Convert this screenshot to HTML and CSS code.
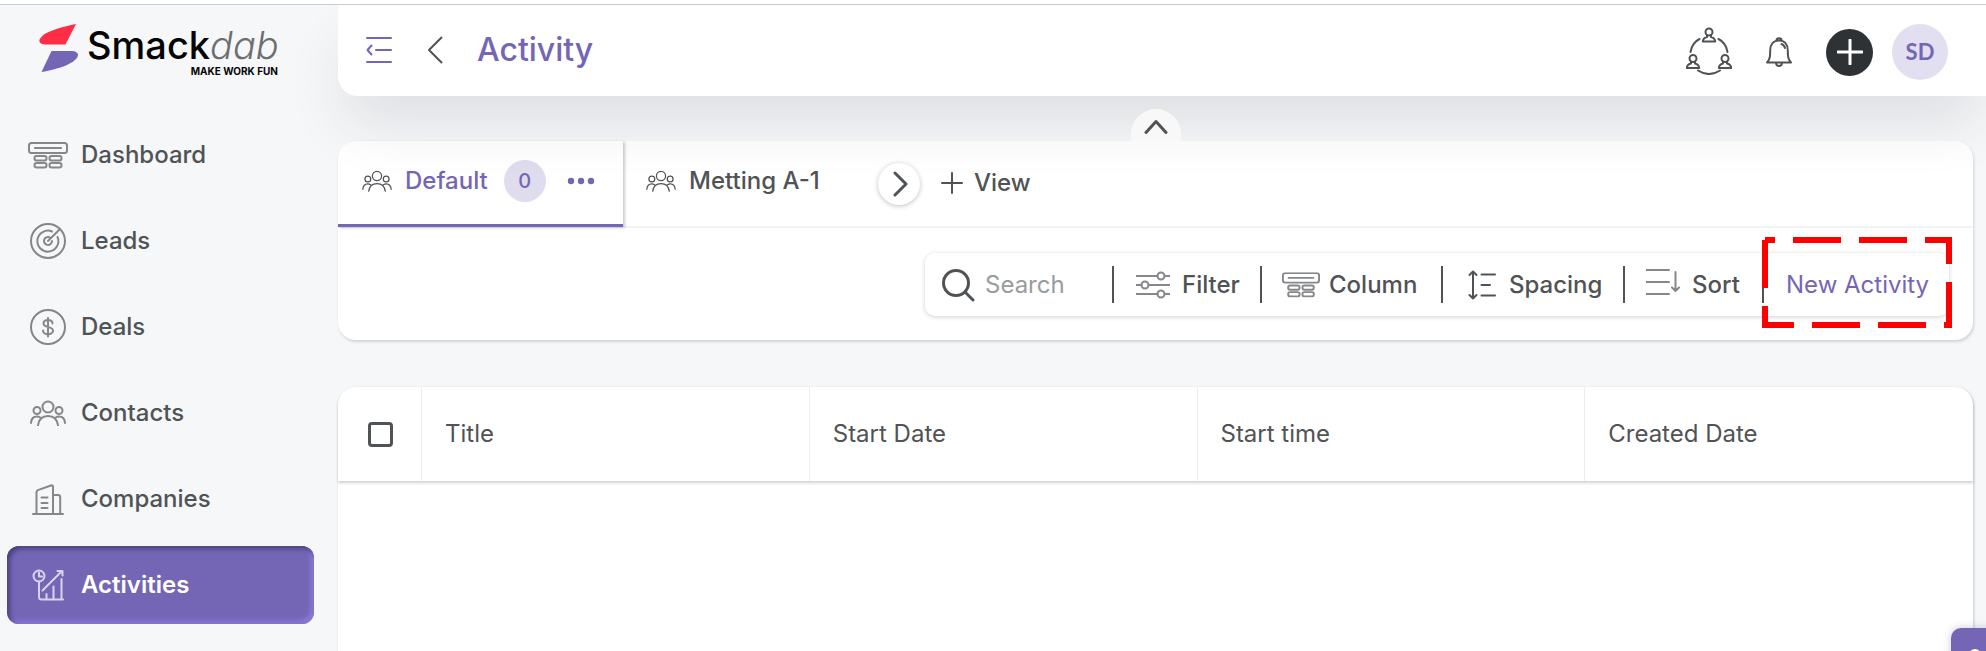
FILE: index.html
```html
<!DOCTYPE html>
<html lang="en">
<head>
<meta charset="utf-8">
<meta name="viewport" content="width=device-width, initial-scale=1">
<title>Smackdab - Activity</title>
<link rel="stylesheet" href="styles.css">
</head>
<body>
<svg class="defs" aria-hidden="true">
  <symbol id="people" viewBox="0 0 36 26">
    <circle cx="18" cy="7" r="5.500"/><circle cx="7" cy="10.500" r="3.500"/><circle cx="29" cy="10.500" r="3.500"/>
    <path d="M8 25.500c.8-6.500 4.500-9.500 10-9.500s9.200 3 10 9.500M1 23c.3-4.500 2.500-6.500 6-6.500 1.300 0 2.300.3 3.300 1M35 23c-.3-4.500-2.500-6.500-6-6.500-1.300 0-2.300.3-3.300 1"/>
  </symbol>
  <symbol id="board" viewBox="0 0 40 27">
    <rect x="1" y="1" width="38" height="10" rx="2.500"/><path d="M7 6h26"/>
    <rect x="6.500" y="14" width="12" height="4.500" rx="2"/><rect x="21.500" y="14" width="12" height="4.500" rx="2"/>
    <rect x="6.500" y="21" width="12" height="4.500" rx="2"/><rect x="21.500" y="21" width="12" height="4.500" rx="2"/>
  </symbol>
</svg>
<div class="app">
  <aside class="sidebar">
    <a class="logo" href="#">
      <svg class="logo-mark" viewBox="0 0 40 48" aria-hidden="true">
        <path class="mark-red" d="M37 0C22 3 3 8 .5 16 0 19 2 20 6 20.500h20.500z"/>
        <path class="mark-purple" d="M12.500 27H32c4 0 7 1.500 7 4C38 39 20 45 2.500 48z"/>
      </svg>
      <span class="logo-text">
        <span class="wordmark">Smack<i>dab</i></span>
        <span class="tagline">MAKE WORK FUN</span>
      </span>
    </a>
    <nav class="nav">
      <a class="nav-item" href="#"><svg class="nav-icon" viewBox="0 0 40 36"><use href="#board" y="5" width="40" height="27"/></svg>Dashboard</a>
      <a class="nav-item" href="#"><svg class="nav-icon" viewBox="0 0 40 36"><circle cx="20" cy="18" r="17"/><path d="M24 8.500A10.500 10.500 0 1 0 29.500 14M21.500 14.200A4 4 0 1 0 24 18M20 18 31.500 6.500"/></svg>Leads</a>
      <a class="nav-item" href="#"><svg class="nav-icon" viewBox="0 0 40 36"><circle cx="20" cy="18" r="17"/><path d="M24.500 14.500c0-2.300-2-3.500-4.500-3.500s-4.500 1.200-4.500 3.500c0 4.800 9.500 2.500 9.500 7 0 2.300-2.300 3.700-5 3.700s-5-1.400-5-3.700M20 9v18.500"/></svg>Deals</a>
      <a class="nav-item" href="#"><svg class="nav-icon" viewBox="0 0 40 36"><use href="#people" x="2" y="5" width="36" height="26"/></svg>Contacts</a>
      <a class="nav-item" href="#"><svg class="nav-icon" viewBox="0 0 40 36"><path d="M5 33h30M8.500 33V11c0-1 .4-1.500 1.300-1.900L23 4.500c1.300-.4 2 .1 2 1.300V33M25 14h5c1.500 0 2.200.7 2.200 2.200V33M13.500 16.500h6M13.500 22h6M13.500 27h6"/></svg>Companies</a>
      <a class="nav-item active" href="#" aria-current="page"><svg class="nav-icon" viewBox="0 0 40 36"><circle cx="11" cy="9" r="5.500"/><path d="M11 5.500V9.500h3M11 14.500V30c0 1.700 1 2.500 2.500 2.500H35M14.500 23.500 34 4M29.500 4H34.500V8.500M18.500 32v-5M25.500 32V19.500M33.500 32V12"/></svg>Activities</a>
    </nav>
  </aside>
  <div class="main">
    <header class="topbar">
      <button class="icon-btn" aria-label="Collapse menu"><svg class="menu-icon" width="26" height="28" viewBox="0 0 26 28"><path d="M1 2h24M10 14h15M1 26h24M5.500 9.500 1.500 14l4 4.500"/></svg></button>
      <button class="icon-btn back" aria-label="Back"><svg width="16" height="28" viewBox="0 0 16 28"><path d="M14.500 1.500 2 14l12.500 12.500"/></svg></button>
      <h1>Activity</h1>
      <div class="top-actions">
        <button class="icon-btn team" aria-label="Team"><svg width="46" height="48" viewBox="0 0 46 48"><g id="person"><circle cx="23" cy="5" r="3.500"/><path d="M21 8v2c-3 .7-4 2-4.200 4.500h12.400C29 12 28 10.700 25 10V8"/></g><use href="#person" x="-16" y="26.500"/><use href="#person" x="16" y="26.500"/><path d="M4.500 25C5.500 19 8.500 14.500 13.500 12M41.500 25c-1-6-4-10.500-9-13M12 43.500c7 4.500 15 4.500 22 0"/></svg></button>
        <button class="icon-btn bell" aria-label="Notifications"><svg width="26" height="30" viewBox="0 0 26 30"><path d="M1 25.500c3-3.500 3.200-6 3.200-12C4.200 7.500 7.500 3.500 13 3.500s8.800 4 8.800 10c0 6 .2 8.500 3.200 12zM10.500 3.500c0-3 5-3 5 0M10 26c.3 4 5.700 4 6 0M15.500 7c2 .6 3 2 3.500 4"/></svg></button>
        <button class="add" aria-label="Add"><svg width="26" height="26" viewBox="0 0 26 26"><path d="M13 1v24M1 13h24"/></svg></button>
        <button class="avatar">SD</button>
      </div>
    </header>
    <main class="content">
      <section class="panel">
        <button class="collapse" aria-label="Collapse panel"><svg width="24" height="16" viewBox="0 0 24 16"><path d="m2 13.500 10-11 10 11"/></svg></button>
        <div class="tabs">
          <div class="tab selected">
            <svg class="people" viewBox="0 0 36 26"><use href="#people"/></svg>
            <a href="#">Default</a><span class="count">0</span>
            <button class="icon-btn dots" aria-label="View options"><svg width="28" height="8" viewBox="0 0 28 8"><circle cx="4" cy="4" r="3.200"/><circle cx="14" cy="4" r="3.200"/><circle cx="24" cy="4" r="3.200"/></svg></button>
          </div>
          <div class="tab second">
            <svg class="people" viewBox="0 0 36 26"><use href="#people"/></svg>
            <a href="#">Metting A-1</a>
          </div>
          <button class="next" aria-label="Next views"><svg width="16" height="26" viewBox="0 0 16 26"><path d="m2 2 11 11L2 24"/></svg></button>
          <button class="add-view"><svg width="22" height="22" viewBox="0 0 22 22"><path d="M11 1v20M1 11h20"/></svg>View</button>
        </div>
        <div class="tool-row">
          <div class="toolbar">
            <label class="search"><svg width="34" height="34" viewBox="0 0 34 34"><circle cx="15" cy="15" r="12.500"/><path d="m24 24 8 8"/></svg><input type="search" placeholder="Search" aria-label="Search"></label>
            <button class="tool filter"><svg width="34" height="28" viewBox="0 0 34 28"><path d="M0 5h21.500M28.500 5H34M0 14h5.500M12.500 14H34M0 23h21.500M28.500 23H34"/><circle cx="25" cy="5" r="3.500"/><circle cx="9" cy="14" r="3.500"/><circle cx="25" cy="23" r="3.500"/></svg>Filter</button>
            <button class="tool column"><svg width="38" height="28" viewBox="0 0 40 27"><use href="#board"/></svg>Column</button>
            <button class="tool spacing"><svg width="28" height="30" viewBox="0 0 28 30"><path d="M5 1.500v27M1.500 5 5 1.500 8.500 5M1.500 25 5 28.500 8.500 25M13.500 4.500H27M13.500 15H22M13.500 25.500H27"/></svg>Spacing</button>
            <button class="tool sort"><svg width="34" height="36" viewBox="0 0 34 36"><path d="M0 3h23M0 15h23M0 27h23M29.500 5v19M26 20.500l3.500 3.500 3.500-3.500"/></svg>Sort</button>
            <button class="tool new">New Activity
              <svg class="marker" width="190" height="91" viewBox="0 0 190 91" aria-hidden="true"><path d="M3 3v85h184V3H3"/></svg>
            </button>
          </div>
        </div>
      </section>
      <section class="table-card">
        <table>
          <colgroup><col class="check-col"><col><col><col><col></colgroup>
          <thead><tr>
            <th class="check"><input type="checkbox" aria-label="Select all"></th>
            <th>Title</th><th>Start Date</th><th>Start time</th><th>Created Date</th>
          </tr></thead>
        </table>
      </section>
    </main>
  </div>
</div>
<button class="support" aria-label="Support"><svg width="24" height="24" viewBox="0 0 24 24"><circle cx="12" cy="7" r="6"/><path d="M2 24c0-7 4-9 10-9s10 2 10 9z"/></svg></button>
</body>
</html>
```

FILE: styles.css
```css
:root {
  --purple: #7466b5;
  --ink: #505356;
  --page: #f5f7f9;
  --lilac: #e2dff0;
}
* { box-sizing: border-box; }
body {
  margin: 0;
  font: 500 24px/32px Inter, "Liberation Sans", sans-serif;
  color: var(--ink);
  background: var(--page);
}
button { font: inherit; color: inherit; border: 0; padding: 0; background: none; cursor: pointer; }
a { color: inherit; text-decoration: none; }
svg { display: block; flex: none; fill: none; stroke: currentColor; stroke-width: 2; stroke-linecap: round; stroke-linejoin: round; }
.defs { position: absolute; width: 0; height: 0; }
.app { display: flex; min-height: 100vh; border-top: 4px solid #fff; box-shadow: inset 0 1px #ccc; overflow: hidden; padding-top: 1px; }

.sidebar { flex: none; width: 338px; padding: 12px 24px 24px 7px; }
.logo { display: flex; gap: 8px; padding: 7px 0 0 32px; height: 99px; color: #050505; }
.logo-mark { width: 40px; height: 48px; stroke: none; }
.mark-red { fill: #ff2d46; }
.mark-purple { fill: var(--purple); }
.logo-text { display: flex; flex-direction: column; width: 191px; }
.wordmark { font-size: 38px; line-height: 42px; white-space: nowrap; }
.wordmark i { font-weight: 300; color: #6d6e70; }
.tagline { align-self: flex-end; font-size: 10px; line-height: 10px; font-weight: 700; }
.nav { display: flex; flex-direction: column; gap: 8px; }
.nav-item { display: flex; align-items: center; gap: 13px; height: 78px; padding: 0 21px; border-radius: 12px; }
.nav-icon { width: 40px; height: 36px; stroke: #85878a; stroke-width: 2; }
.active {
  color: #fff; font-weight: 600; background: var(--purple);
  box-shadow: inset 3px 3px 5px #4b4180, inset -3px -3px 5px #8d7cdc;
}
.active .nav-icon { stroke: #d8d3ee; }

.main { flex: 1; min-width: 0; display: flex; flex-direction: column; }
.topbar {
  position: relative; z-index: 1; display: flex; align-items: center; height: 91px; padding: 0 38px 0 28px;
  background: #fff; border-radius: 0 0 0 20px; box-shadow: 0 32px 60px -8px rgba(40, 45, 50, .12);
}
.menu-icon { color: var(--purple); }
.icon-btn, h1 { margin-bottom: 2px; }
.back { margin-left: 35px; }
h1 { margin-top: 0; margin-left: 34px; font-size: 32px; line-height: 40px; font-weight: 500; color: var(--purple); }
.top-actions { display: flex; align-items: center; margin-left: auto; padding-top: 3px; }
.bell { margin: 0 34px; }
.add { display: grid; place-items: center; width: 47px; height: 47px; border-radius: 50%; color: #fff; background: #2e3235; }
.add svg { stroke-width: 3; }
.avatar { width: 56px; height: 56px; margin-left: 19px; border-radius: 50%; background: var(--lilac); color: var(--purple); font: 700 22px/32px Lato, sans-serif; }

.content { flex: 1; display: flex; flex-direction: column; gap: 47px; padding: 45px 13px 0 0; }
.panel { position: relative; background: #fff; border-radius: 18px; box-shadow: 1px 2px 3px rgba(0, 0, 0, .15); }
.collapse { position: absolute; z-index: 2; left: 50%; bottom: 100%; display: grid; place-items: center; width: 50px; height: 32px; margin-left: -25px; padding-top: 3px; border-radius: 25px 25px 0 0; background: #f8f8f8; }
.collapse svg { stroke-width: 3; }
.tabs { display: flex; align-items: center; height: 87px; border-bottom: 2px solid #f1f2f3; }
.tab { display: flex; align-items: center; height: 86px; }
.people { width: 30px; height: 22px; stroke-width: 1.500; margin-right: 13px; }
.selected { width: 285px; padding: 0 28px 3px 24px; color: var(--purple); border-bottom: 3px solid var(--purple); border-top-left-radius: 18px; box-shadow: 2px 1px 3px rgba(0, 0, 0, .2); }
.selected .people { color: var(--ink); }
.count { display: grid; place-items: center; width: 42px; height: 42px; margin-left: 16px; border-radius: 50%; background: #dfdcee; font-size: 20px; }
.dots { margin: 0 0 0 auto; }
.dots svg { fill: currentColor; stroke: none; }
.second { padding: 0 0 5px 23px; width: 255px; white-space: nowrap; }
.next { display: grid; place-items: center; width: 42px; height: 42px; padding-left: 3px; border-radius: 50%; background: #fff; box-shadow: 0 1px 5px rgba(0, 0, 0, .25); z-index: 2; }
.next svg { stroke-width: 3; }
.add-view { display: flex; align-items: center; gap: 11px; margin-left: 21px; padding-bottom: 2px; }
.tool-row { display: flex; justify-content: flex-end; padding: 25px 24px 24px; }
.toolbar { display: flex; align-items: center; height: 63px; border-radius: 10px; background: #fff; box-shadow: 0 1px 5px rgba(0, 0, 0, .18); }
.search { display: flex; align-items: center; gap: 10px; width: 187px; padding-left: 16px; }
.search svg { stroke-width: 3; }
.search input { width: 110px; border: 0; padding: 0; outline: 0; font: inherit; font-weight: 400; background: none; }
.search input::placeholder { color: #999c9e; opacity: 1; }
.tool { position: relative; display: flex; align-items: center; height: 37px; border-left: 2px solid #505356; white-space: nowrap; }
.filter { gap: 12px; width: 148px; padding-left: 22px; }
.column { gap: 9px; width: 181px; padding-left: 20px; }
.spacing { gap: 13px; width: 182px; padding-left: 25px; }
.sort { gap: 12px; width: 139px; padding-left: 21px; }
.new { width: 187px; padding-left: 22px; color: var(--purple); font-weight: 400; }
.filter svg, .column svg, .sort svg { stroke-width: 2; color: #85878a; }
.marker { position: absolute; left: -2px; top: -29px; color: red; }
.marker path { stroke-width: 6; stroke-linecap: butt; stroke-linejoin: miter; stroke-dasharray: 48 18; }

.table-card { flex: 1; min-height: 264px; background: #fff; border-radius: 18px 18px 0 0; box-shadow: 1px 1px 3px rgba(0, 0, 0, .18); }
table { width: 100%; table-layout: fixed; border-collapse: separate; border-spacing: 0; box-shadow: 0 2px 3px rgba(0, 0, 0, .18); border-radius: 18px 18px 0 0; }
.check-col { width: 84px; }
th { height: 94px; padding: 0 23px; text-align: left; font-weight: 400; border-right: 1px solid #ededee; }
th:last-child { border-right: 0; }
.check { padding: 0 0 0 30px; }
.check input { display: block; appearance: none; width: 25px; height: 25px; margin: 0; border: 3px solid #505356; border-radius: 4px; background: #fff; }
.support { position: fixed; z-index: 3; right: -13px; bottom: -25px; display: grid; place-items: start center; width: 48px; height: 48px; padding-top: 20px; border-radius: 10px; background: var(--purple); color: #fff; box-shadow: 0 0 8px rgba(60, 50, 110, .25); }
.support svg { fill: #fff; stroke: none; }
```
